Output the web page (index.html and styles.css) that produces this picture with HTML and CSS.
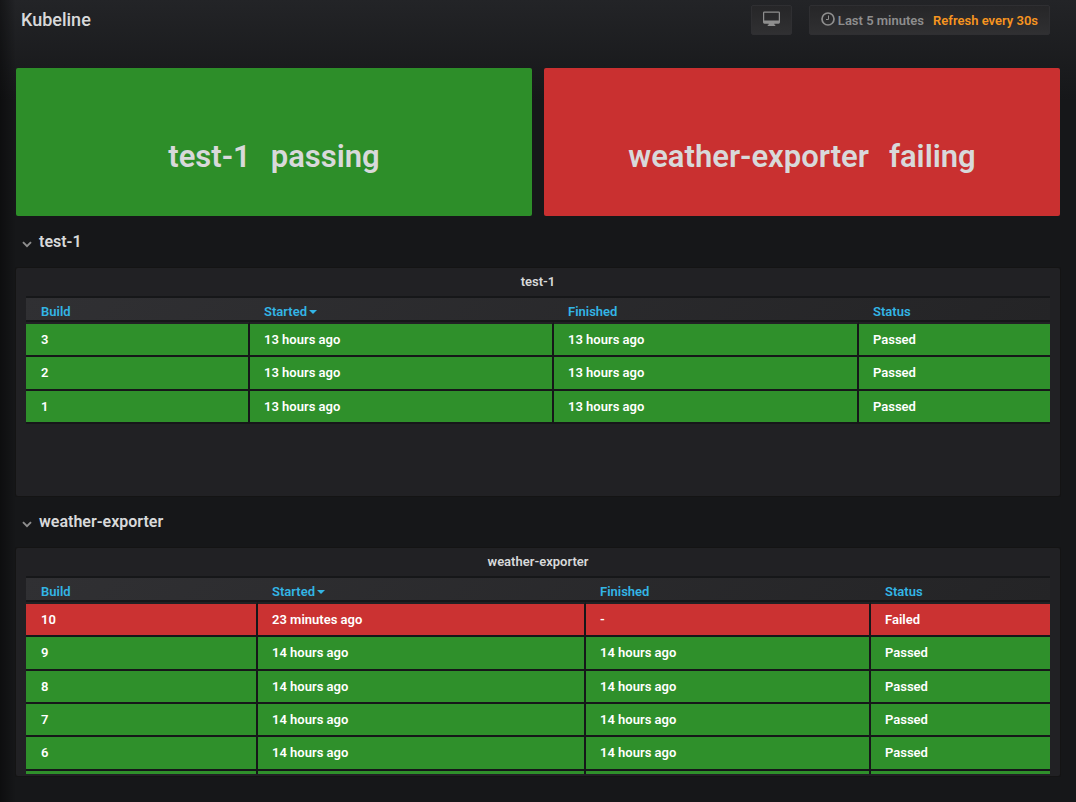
FILE: index.html
```html
<!DOCTYPE html>
<html lang="en">
<head>
<meta charset="utf-8">
<meta name="viewport" content="width=device-width, initial-scale=1">
<title>Kubeline</title>
<link rel="stylesheet" href="styles.css">
</head>
<body>
<header class="navbar">
  <h1 class="navbar-title">Kubeline</h1>
  <div class="navbar-actions">
    <button class="nav-button nav-view" type="button" aria-label="Cycle view mode">
      <svg width="18" height="16" viewBox="0 0 18 16" aria-hidden="true"><path fill="#8e8e8e" fill-rule="evenodd" d="M1.500 0h15a1.500 1.500 0 0 1 1.500 1.500v10a1.500 1.500 0 0 1-1.500 1.500H12v1h1v1.500H5V14h1v-1H1.500A1.500 1.500 0 0 1 0 11.500v-10A1.500 1.500 0 0 1 1.500 0zM1.300 1.300v8.200h15.400V1.300z"/></svg>
    </button>
    <button class="nav-button nav-time" type="button">
      <svg width="14" height="14" viewBox="0 0 14 14" fill="none" stroke="#8e8e8e" aria-hidden="true"><circle cx="7" cy="7" r="6" stroke-width="1.700"/><path d="M7.500 3.500v4H5" stroke-width="1"/></svg>
      <span>Last 5 minutes</span>
      <span class="refresh">Refresh every 30s</span>
    </button>
  </div>
</header>
<main class="dashboard">
  <section class="tiles">
    <div class="tile tile-ok"><span>test-1</span><span>passing</span></div>
    <div class="tile tile-bad"><span>weather-exporter</span><span>failing</span></div>
  </section>

  <section>
    <h2 class="row-heading"><button class="row-toggle" type="button" aria-expanded="true">
      <svg width="10" height="7" viewBox="0 0 10 7" aria-hidden="true"><path d="M1 1.200l4 4 4-4" fill="none" stroke="#8e8e8e" stroke-width="1.900"/></svg>
      <span>test-1</span></button></h2>
    <div class="panel">
      <h3 class="panel-title">test-1</h3>
      <div class="table-scroll">
        <table class="builds">
          <colgroup><col class="t-build"><col class="t-started"><col class="t-finished"><col class="t-status"></colgroup>
          <thead><tr><th>Build</th><th>Started<i class="caret"></i></th><th>Finished</th><th>Status</th></tr></thead>
          <tbody>
            <tr class="passed"><td>3</td><td>13 hours ago</td><td>13 hours ago</td><td>Passed</td></tr>
            <tr class="passed"><td>2</td><td>13 hours ago</td><td>13 hours ago</td><td>Passed</td></tr>
            <tr class="passed"><td>1</td><td>13 hours ago</td><td>13 hours ago</td><td>Passed</td></tr>
          </tbody>
        </table>
      </div>
    </div>
  </section>

  <section>
    <h2 class="row-heading"><button class="row-toggle" type="button" aria-expanded="true">
      <svg width="10" height="7" viewBox="0 0 10 7" aria-hidden="true"><path d="M1 1.200l4 4 4-4" fill="none" stroke="#8e8e8e" stroke-width="1.900"/></svg>
      <span>weather-exporter</span></button></h2>
    <div class="panel">
      <h3 class="panel-title">weather-exporter</h3>
      <div class="table-scroll">
        <table class="builds">
          <colgroup><col class="w-build"><col class="w-started"><col class="w-finished"><col class="w-status"></colgroup>
          <thead><tr><th>Build</th><th>Started<i class="caret"></i></th><th>Finished</th><th>Status</th></tr></thead>
          <tbody>
            <tr class="failed"><td>10</td><td>23 minutes ago</td><td>-</td><td>Failed</td></tr>
            <tr class="passed"><td>9</td><td>14 hours ago</td><td>14 hours ago</td><td>Passed</td></tr>
            <tr class="passed"><td>8</td><td>14 hours ago</td><td>14 hours ago</td><td>Passed</td></tr>
            <tr class="passed"><td>7</td><td>14 hours ago</td><td>14 hours ago</td><td>Passed</td></tr>
            <tr class="passed"><td>6</td><td>14 hours ago</td><td>14 hours ago</td><td>Passed</td></tr>
            <tr class="passed"><td></td><td></td><td></td><td></td></tr>
          </tbody>
        </table>
      </div>
    </div>
  </section>
</main>
</body>
</html>
```
FILE: styles.css
```css
* {
  box-sizing: border-box;
}

body {
  margin: 0;
  min-height: 100vh;
  padding-bottom: 26px;
  color: #d8d9da;
  font: 600 13px/20px Roboto, sans-serif;
  background:
    linear-gradient(90deg, rgba(0, 0, 0, 0.4), transparent 16px),
    linear-gradient(180deg, #232427, #161719 100px) #161719;
}

h1,
h2,
h3 {
  margin: 0;
  font-weight: 600;
}

button {
  font: inherit;
  color: inherit;
  cursor: pointer;
}

.navbar {
  display: flex;
  align-items: center;
  justify-content: space-between;
  height: 40px;
  padding: 0 26px 0 21px;
}

.navbar-title {
  font-size: 18px;
  font-weight: 500;
}

.navbar-actions {
  display: flex;
  gap: 17px;
}

.nav-button {
  display: flex;
  align-items: center;
  justify-content: center;
  height: 30px;
  padding: 0 11px;
  color: #8e8e8e;
  background: linear-gradient(180deg, #262628, #303032);
  border: 1px solid #2f2f32;
  border-radius: 2px;
}

.nav-button svg {
  margin-bottom: 2px;
}

.nav-button span {
  padding-top: 2px;
}

.nav-view {
  width: 41px;
}

.nav-time {
  gap: 3px;
}

.refresh {
  margin-left: 6px;
  color: #f79520;
}

.dashboard {
  padding: 28px 16px 0;
}

.tiles {
  display: grid;
  grid-template-columns: 1fr 1fr;
  gap: 12px;
}

.tile {
  display: flex;
  align-items: center;
  justify-content: center;
  gap: 20px;
  height: 148px;
  padding-top: 30px;
  border-radius: 2px;
  font-size: 31px;
  line-height: 40px;
}

.tile-ok {
  background: #2d8e29;
}

.tile-bad {
  background: #c93030;
}

.row-heading {
  height: 52px;
  padding: 16px 6px 0;
  font-size: 16px;
  line-height: 20px;
}

.row-toggle {
  display: flex;
  align-items: center;
  gap: 7px;
  padding: 0;
  background: none;
  border: 0;
}

.row-toggle svg {
  margin-top: 4px;
}

.panel {
  height: 228px;
  padding: 0 10px 2px;
  background: #212124;
  border-radius: 2px;
  box-shadow: 0 0 0 1px #141414;
}

.panel-title {
  height: 28px;
  font-size: 13px;
  line-height: 28px;
  text-align: center;
}

.table-scroll {
  height: 198px;
  overflow: hidden;
}

.builds {
  width: 100%;
  table-layout: fixed;
  border-collapse: separate;
  border-spacing: 0;
}

.t-build { width: 224px; }
.t-started { width: 304px; }
.t-finished { width: 305px; }
.t-status { width: 191px; }

.w-build { width: 232px; }
.w-started { width: 328px; }
.w-finished { width: 285px; }
.w-status { width: 179px; }

.builds thead tr {
  background: linear-gradient(135deg, #303033, #242426);
}

.builds th {
  height: 26px;
  padding: 6px 0 0 14px;
  border: solid #161719;
  border-width: 2px 0;
  color: #33b5e5;
  font-weight: 600;
  line-height: 16px;
  text-align: left;
}

.builds td {
  height: 33px;
  padding: 0 14px;
  border-right: 2px solid #161719;
  border-bottom: 2px solid #161719;
  color: #fff;
  line-height: 20px;
}

.builds th:first-child,
.builds td:first-child {
  padding-left: 15px;
}

.builds td:last-child {
  border-right: 0;
}

.builds tbody tr:first-child td {
  height: 35px;
  border-top: 2px solid #212124;
}

.builds tbody tr:nth-child(3n + 2) td {
  height: 34px;
}

.passed td {
  background: #2f902b;
}

.failed td {
  background: #cb3232;
}

.caret {
  display: inline-block;
  margin-left: 2px;
  vertical-align: 2px;
  border: 4px solid transparent;
  border-top-color: #33b5e5;
  border-bottom: 0;
}
```
